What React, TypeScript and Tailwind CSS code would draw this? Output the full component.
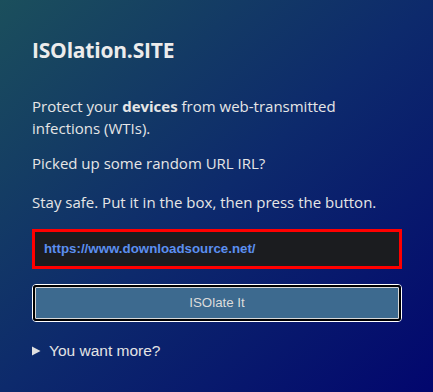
import React from "react";

export default function App() {
  return (
    <div
      className="w-[433px] h-[392px] overflow-hidden bg-[linear-gradient(to_bottom_right,#1b4f5c,#0d2a6c_50%,#02066e)] text-[#e8e8e8]"
    >
      <div className="px-8 pt-[36px]" style={{ fontFamily: '"Open Sans", "Noto Sans", sans-serif' }}>
        <h1 className="text-[21px] leading-[28px] font-bold text-[#ececec] tracking-[-0.2px]">ISOlation.SITE</h1>
        <p className="mt-[31px] text-[15px] leading-[22px] text-[#e6e6e6]">
          Protect your <b className="font-bold">devices</b> from web-transmitted infections (WTIs).
        </p>
        <p className="mt-[13px] text-[15px] leading-[22px] text-[#e6e6e6]">Picked up some random URL IRL?</p>
        <p className="mt-[17px] text-[15px] leading-[22px] text-[#e6e6e6]">
          Stay safe. Put it in the box, then press the button.
        </p>
      </div>
      <div className="px-8 mt-[16px]" style={{ fontFamily: '"Liberation Sans", Arial, sans-serif' }}>
        <div className="h-[40px] w-[370px] border-[3px] border-[#ff0000] bg-[#1b1c1f] flex items-center pl-[9px]">
          <span className="text-[13.3px] font-bold text-[#5b8ff0]">https://www.downloadsource.net/</span>
        </div>
        <div className="mt-[15px] w-[370px] h-[38px] rounded-[4px] border border-white">
          <div className="w-full h-full rounded-[3px] border-2 border-black">
            <div className="w-full h-full rounded-[1px] border border-[#d8d8d8] bg-[#3d6a8f] flex items-center justify-center text-[13.3px] text-[#dcdcdc]">
              ISOlate It
            </div>
          </div>
        </div>
        <div className="mt-[17px] flex items-center text-[15.5px] text-[#e4e4e4]">
          <svg width="9" height="10" viewBox="0 0 9 10" className="mr-[8px]">
            <path d="M0 0.5 L8.5 5 L0 9.5 Z" fill="#e0e0e0" />
          </svg>
          <span>You want more?</span>
        </div>
      </div>
    </div>
  );
}
